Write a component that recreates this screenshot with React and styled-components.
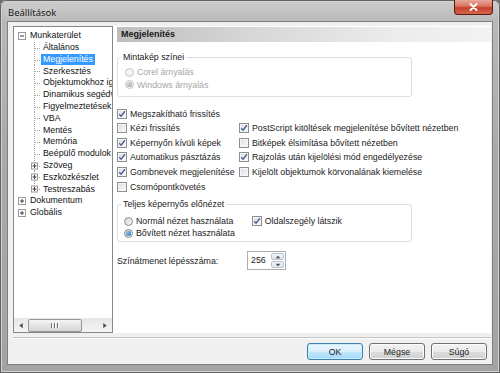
import React from 'react'
import styled, { createGlobalStyle } from 'styled-components'

const GlobalStyle = createGlobalStyle`
  html, body {
    margin: 0;
    padding: 0;
    background: #6b6b6b;
  }
  body {
    font-family: "Liberation Sans", Arial, sans-serif;
  }
`

const Window = styled.div`
  width: 500px;
  height: 373px;
  box-sizing: border-box;
  display: flex;
  flex-direction: column;
  padding: 0 7px 8px 7px;
  background: linear-gradient(to bottom, #cdcdcd 0%, #b8b8b8 6%, #aaaaaa 40%, #a3a3a3 100%);
  border-radius: 6px 6px 0 0;
  box-shadow: inset 0 0 0 1px #626262, inset 0 0 0 2px #d2d2d2;
`

const TitleBar = styled.div`
  height: 21px;
  display: flex;
  justify-content: space-between;
  align-items: flex-start;
  flex: none;
`

const Title = styled.div`
  padding: 4px 0 0 1px;
  line-height: 17px;
  font-family: "Noto Sans", "Open Sans", sans-serif;
  font-size: 9.5px;
  color: #161616;
  text-shadow: 0 0 6px rgba(255, 255, 255, 0.8);
`

const CloseButton = styled.div`
  width: 39px;
  height: 15px;
  box-sizing: border-box;
  border: 1px solid #5a1a12;
  border-top: none;
  border-radius: 0 0 4px 4px;
  background: linear-gradient(to bottom, #e9a99b 0%, #d9705c 45%, #c4402a 55%, #d46650 100%);
  display: flex;
  align-items: center;
  justify-content: center;
`

const Client = styled.div`
  flex: 1;
  display: flex;
  flex-direction: column;
  background: #f0f0f0;
  border: 1px solid #7f7f7f;
  min-height: 0;
`

const Main = styled.div`
  flex: 1;
  display: flex;
  padding: 4px 1px 0 5px;
  min-height: 0;
`

const Tree = styled.div`
  width: 100px;
  box-sizing: border-box;
  flex: none;
  display: flex;
  flex-direction: column;
  border: 1px solid #828790;
  background: #fff;
`

const TreeList = styled.div`
  flex: 1;
  padding-top: 3px;
  overflow: hidden;
  font-size: 8.8px;
  color: #111;
`

const TreeRow = styled.div`
  height: 11.8px;
  display: flex;
  align-items: center;
  white-space: nowrap;
`

const NodeLabel = styled.span`
  padding: 0 2px;
  line-height: 11.5px;
  background: ${p => (p.$selected ? '#3399ff' : 'transparent')};
  color: ${p => (p.$selected ? '#fff' : '#111')};
`

const HScroll = styled.div`
  height: 14px;
  flex: none;
  display: flex;
  align-items: center;
  background: linear-gradient(to bottom, #e6e6e6, #f4f4f4);
`

const ScrollArrow = styled.div`
  width: 14px;
  height: 14px;
  flex: none;
  display: flex;
  align-items: center;
  justify-content: center;
`

const ScrollThumb = styled.div`
  width: 54px;
  height: 13px;
  box-sizing: border-box;
  border: 1px solid #979797;
  border-radius: 2px;
  background: linear-gradient(to bottom, #f4f4f4, #e4e4e4 50%, #d6d6d6);
  display: flex;
  align-items: center;
  justify-content: center;
  gap: 1px;
`

const Grip = styled.span`
  width: 1px;
  height: 5px;
  background: #6f6f6f;
  box-shadow: 1px 0 0 #fff;
  margin-right: 1px;
`

const ScrollTrack = styled.div`
  flex: 1;
`

const Panel = styled.div`
  flex: 1;
  background: #fff;
  padding: 1px 0 0 4px;
  display: flex;
  flex-direction: column;
  font-size: 8.8px;
  color: #1b1b1b;
`

const Header = styled.div`
  height: 15px;
  line-height: 15px;
  padding-left: 4px;
  font-size: 9px;
  font-weight: bold;
  color: #1a1a1a;
  background: linear-gradient(to right, #bdbdbd 0%, #d6d6d6 35%, #ececec 75%, #f2f2f2 100%);
`

const Content = styled.div`
  padding-top: 10px;
  display: flex;
  flex-direction: column;
`

const GroupBox = styled.fieldset`
  margin: ${p => p.$mt || 0}px 0 0 0;
  padding: ${p => p.$pt}px 6px ${p => p.$pb}px 3px;
  width: ${p => p.$w}px;
  box-sizing: border-box;
  border: 1px solid #d5dfe5;
  border-radius: 3px;
  min-width: 0;
`

const Legend = styled.legend`
  padding: 0 2px;
  line-height: 11px;
  color: #1b1b1b;
`

const OptionStack = styled.div`
  display: flex;
  flex-direction: column;
  padding-left: ${p => p.$indent}px;
`

const OptionGrid = styled.div`
  display: grid;
  grid-template-columns: ${p => p.$col}px auto;
  grid-auto-rows: ${p => p.$row}px;
  margin-top: ${p => p.$mt || 0}px;
  padding-left: ${p => p.$indent || 0}px;
`

const Option = styled.div`
  display: flex;
  align-items: center;
  gap: 3px;
  height: ${p => (p.$h ? `${p.$h}px` : 'auto')};
  white-space: nowrap;
  color: ${p => (p.$disabled ? '#a6a6a6' : '#1b1b1b')};
`

const Box = styled.span`
  width: 10px;
  height: 10px;
  box-sizing: border-box;
  flex: none;
  border: 1px solid #8e8f8f;
  background: linear-gradient(135deg, #d9dadb 0%, #eeeeee 55%, #fbfbfb 100%);
  box-shadow: inset 0 0 0 1px #f6f6f6;
  display: flex;
  align-items: center;
  justify-content: center;
`

const Radio = styled.span`
  width: 9px;
  height: 9px;
  box-sizing: border-box;
  flex: none;
  border-radius: 50%;
  border: 1px solid ${p => (p.$disabled ? '#c4c4c4' : '#8a8a8a')};
  background: ${p => (p.$disabled ? '#f4f4f4' : 'linear-gradient(135deg, #d7d7d7, #f7f7f7)')};
  display: flex;
  align-items: center;
  justify-content: center;
`

const Dot = styled.span`
  width: 5px;
  height: 5px;
  border-radius: 50%;
  background: ${p => (p.$disabled
    ? 'radial-gradient(circle at 35% 35%, #d6d6d6, #9c9c9c)'
    : 'radial-gradient(circle at 35% 35%, #7fc4f5, #1a5fa8)')};
`

const SpinRow = styled.div`
  display: flex;
  align-items: center;
  margin-top: 9px;
`

const SpinLabel = styled.div`
  width: 130px;
`

const Spin = styled.div`
  width: 39px;
  height: 19px;
  box-sizing: border-box;
  border: 1px solid #abadb3;
  display: flex;
`

const SpinValue = styled.div`
  flex: 1;
  padding-left: 3px;
  line-height: 16px;
`

const SpinButtons = styled.div`
  width: 13px;
  display: flex;
  flex-direction: column;
  gap: 1px;
  padding: 1px 1px 1px 0;
`

const SpinHalf = styled.div`
  flex: 1;
  border: 1px solid #b8c3ce;
  border-radius: 2px;
  background: linear-gradient(to bottom, #f3f6f9, #dde4ec);
  display: flex;
  align-items: center;
  justify-content: center;
`

const Footer = styled.div`
  flex: none;
  height: 27px;
  box-sizing: border-box;
  margin: 4px 1px 0 5px;
  border-top: 1px solid #c4c4c4;
  box-shadow: inset 0 1px 0 #fdfdfd;
  padding: 5px 4px 0 0;
  display: flex;
  justify-content: flex-end;
  gap: 6px;
`

const Button = styled.div`
  width: 56px;
  height: 17px;
  box-sizing: border-box;
  border: 1px solid ${p => (p.$default ? '#3c7fb1' : '#707070')};
  border-radius: 3px;
  background: ${p => (p.$default
    ? 'linear-gradient(to bottom, #eaf6fd 0%, #d9f0fc 50%, #bee6fd 51%, #a7d9f5 100%)'
    : 'linear-gradient(to bottom, #f2f2f2 0%, #ebebeb 50%, #dddddd 51%, #cfcfcf 100%)')};
  box-shadow: inset 0 0 0 1px ${p => (p.$default ? '#c8ecfb' : '#fbfbfb')};
  display: flex;
  align-items: center;
  justify-content: center;
  font-size: 8.8px;
  color: #1b1b1b;
`

const Gutter = ({ level, expander, last }) => {
  if (level === 0) {
    return (
      <svg width="14" height="12" viewBox="0 0 14 12" style={{ flex: 'none' }}>
        <rect x="4.5" y="2.5" width="7" height="7" fill="#fff" stroke="#9a9a9a" />
        <line x1="6" y1="6" x2="10" y2="6" stroke="#3b3b3b" />
        {expander === 'plus' && <line x1="8" y1="4" x2="8" y2="8" stroke="#3b3b3b" />}
      </svg>
    )
  }
  return (
    <svg width="27" height="12" viewBox="0 0 27 12" style={{ flex: 'none' }}>
      <line x1="20.5" y1="0" x2="20.5" y2={last ? 6 : 12} stroke="#a0a0a0" strokeDasharray="1 1" />
      <line x1="21" y1="6.5" x2="27" y2="6.5" stroke="#a0a0a0" strokeDasharray="1 1" />
      {expander && (
        <>
          <rect x="17.5" y="3" width="6" height="6" fill="#fff" stroke="#9a9a9a" />
          <line x1="18.5" y1="6" x2="22.5" y2="6" stroke="#3b3b3b" />
          <line x1="20.5" y1="4" x2="20.5" y2="8" stroke="#3b3b3b" />
        </>
      )}
    </svg>
  )
}

const Check = ({ checked }) => (
  <Box>
    {checked && (
      <svg width="8" height="8" viewBox="0 0 8 8">
        <path d="M1.2 4.2 L3.1 6.2 L6.9 1.3" fill="none" stroke="#4a5f97" strokeWidth="1.4" />
      </svg>
    )}
  </Box>
)

const CheckOption = ({ label, checked, h }) => (
  <Option $h={h}>
    <Check checked={checked} />
    <span>{label}</span>
  </Option>
)

const RadioOption = ({ label, checked, disabled, h }) => (
  <Option $h={h} $disabled={disabled}>
    <Radio $disabled={disabled}>{checked && <Dot $disabled={disabled} />}</Radio>
    <span>{label}</span>
  </Option>
)

const Arrow = ({ dir }) => {
  const pts = {
    left: '5,1 1,4 5,7',
    right: '1,1 5,4 1,7',
    up: '0,4 3,1 6,4',
    down: '0,1 3,4 6,1',
  }[dir]
  const w = dir === 'up' || dir === 'down' ? 6 : 6
  return (
    <svg width={w} height="8" viewBox={dir === 'up' || dir === 'down' ? '0 0 6 5' : '0 0 6 8'} style={{ height: dir === 'up' || dir === 'down' ? 4 : 7 }}>
      <polygon points={pts} fill="#4d4d4d" />
    </svg>
  )
}

const treeItems = [
  { label: 'Munkaterület', level: 0, expander: 'minus' },
  { label: 'Általános', level: 1 },
  { label: 'Megjelenítés', level: 1, selected: true },
  { label: 'Szerkesztés', level: 1 },
  { label: 'Objektumokhoz igazítás', level: 1 },
  { label: 'Dinamikus segédvonalak', level: 1 },
  { label: 'Figyelmeztetések', level: 1 },
  { label: 'VBA', level: 1 },
  { label: 'Mentés', level: 1 },
  { label: 'Memória', level: 1 },
  { label: 'Beépülő modulok', level: 1 },
  { label: 'Szöveg', level: 1, expander: 'plus' },
  { label: 'Eszközkészlet', level: 1, expander: 'plus' },
  { label: 'Testreszabás', level: 1, expander: 'plus', last: true },
  { label: 'Dokumentum', level: 0, expander: 'plus' },
  { label: 'Globális', level: 0, expander: 'plus' },
]

const leftChecks = [
  { label: 'Megszakítható frissítés', checked: true },
  { label: 'Kézi frissítés', checked: false },
  { label: 'Képernyőn kívüli képek', checked: true },
  { label: 'Automatikus pásztázás', checked: true },
  { label: 'Gombnevek megjelenítése', checked: true },
  { label: 'Csomópontkövetés', checked: false },
]

const rightChecks = [
  { label: 'PostScript kitöltések megjelenítése bővített nézetben', checked: true },
  { label: 'Bitképek élsimítása bővített nézetben', checked: false },
  { label: 'Rajzolás után kijelölési mód engedélyezése', checked: true },
  { label: 'Kijelölt objektumok körvonalának kiemelése', checked: false },
]

const App = () => {
  const rows = leftChecks.map((c, i) => ({ left: c, right: i >= 1 && i <= 4 ? rightChecks[i - 1] : null }))

  return (
    <Window>
      <GlobalStyle />
      <TitleBar>
        <Title>Beállítások</Title>
        <CloseButton>
          <svg width="9" height="8" viewBox="0 0 9 8">
            <path d="M1.5 1 L7.5 7 M7.5 1 L1.5 7" stroke="#fff" strokeWidth="1.8" strokeLinecap="round" />
          </svg>
        </CloseButton>
      </TitleBar>
      <Client>
        <Main>
          <Tree>
            <TreeList>
              {treeItems.map(item => (
                <TreeRow key={item.label}>
                  <Gutter level={item.level} expander={item.expander} last={item.last} />
                  <NodeLabel $selected={item.selected}>{item.label}</NodeLabel>
                </TreeRow>
              ))}
            </TreeList>
            <HScroll>
              <ScrollArrow><Arrow dir="left" /></ScrollArrow>
              <ScrollThumb><Grip /><Grip /><Grip /></ScrollThumb>
              <ScrollTrack />
              <ScrollArrow><Arrow dir="right" /></ScrollArrow>
            </HScroll>
          </Tree>
          <Panel>
            <Header>Megjelenítés</Header>
            <Content>
              <GroupBox $w={295} $pt={3} $pb={5}>
                <Legend>Mintakép színei</Legend>
                <OptionStack $indent={4}>
                  <RadioOption label="Corel árnyalás" disabled h={12.6} />
                  <RadioOption label="Windows árnyalás" checked disabled h={12.6} />
                </OptionStack>
              </GroupBox>
              <OptionGrid $col={122} $row={14.66} $mt={9}>
                {rows.map(r => (
                  <React.Fragment key={r.left.label}>
                    <CheckOption label={r.left.label} checked={r.left.checked} />
                    {r.right ? <CheckOption label={r.right.label} checked={r.right.checked} /> : <span />}
                  </React.Fragment>
                ))}
              </OptionGrid>
              <GroupBox $w={295} $pt={5} $pb={2} $mt={5}>
                <Legend>Teljes képernyős előnézet</Legend>
                <OptionGrid $col={127.7} $row={12} $indent={3}>
                  <RadioOption label="Normál nézet használata" />
                  <CheckOption label="Oldalszegély látszik" checked />
                  <RadioOption label="Bővített nézet használata" checked />
                </OptionGrid>
              </GroupBox>
              <SpinRow>
                <SpinLabel>Színátmenet lépésszáma:</SpinLabel>
                <Spin>
                  <SpinValue>256</SpinValue>
                  <SpinButtons>
                    <SpinHalf><Arrow dir="up" /></SpinHalf>
                    <SpinHalf><Arrow dir="down" /></SpinHalf>
                  </SpinButtons>
                </Spin>
              </SpinRow>
            </Content>
          </Panel>
        </Main>
        <Footer>
          <Button $default>OK</Button>
          <Button>Mégse</Button>
          <Button>Súgó</Button>
        </Footer>
      </Client>
    </Window>
  )
}

export default App
